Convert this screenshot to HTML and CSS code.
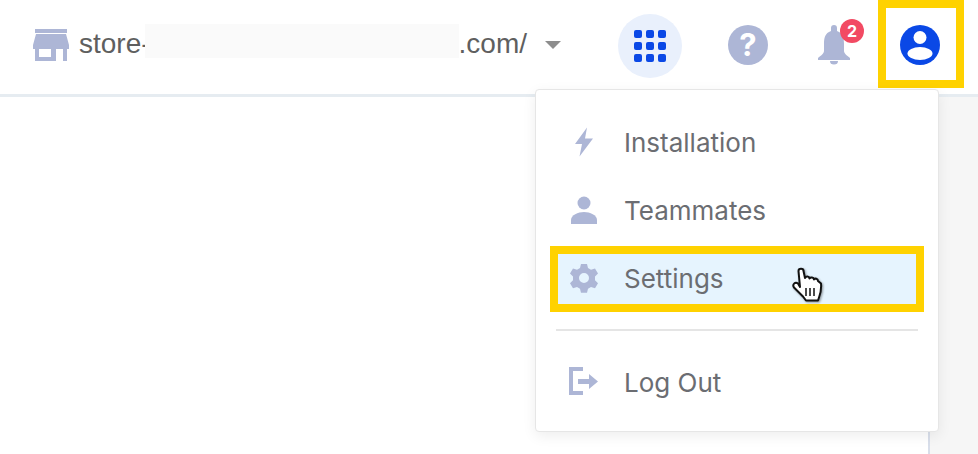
FILE: index.html
```html
<!DOCTYPE html>
<html lang="en">
<head>
<meta charset="utf-8">
<title>Account menu</title>
<link rel="stylesheet" href="styles.css">
</head>
<body>
<header class="topbar">
  <div class="store">
    <svg class="store-icon" width="36" height="32" viewBox="0 0 36 32"><path fill="#adb6d6" fill-rule="evenodd" d="M2 0h32v4H2zM3 5h30l3 11v4H0v-4zM2 20h21v12H2zM6 20v8h12v-8zM30 20h4v12h-4z"/></svg>
    <span class="store-url">store-<span class="redact"></span>.com/</span>
    <svg class="caret" width="16" height="8" viewBox="0 0 16 8"><path fill="#8d8d8d" d="M0 0h16L8 8z"/></svg>
  </div>
  <nav class="tools">
    <span class="apps">
      <svg width="32" height="32" viewBox="0 0 32 32" fill="#0a48e6"><rect x="0" y="0" width="8" height="8" rx="2"/><rect x="12" y="0" width="8" height="8" rx="2"/><rect x="24" y="0" width="8" height="8" rx="2"/><rect x="0" y="12" width="8" height="8" rx="2"/><rect x="12" y="12" width="8" height="8" rx="2"/><rect x="24" y="12" width="8" height="8" rx="2"/><rect x="0" y="24" width="8" height="8" rx="2"/><rect x="12" y="24" width="8" height="8" rx="2"/><rect x="24" y="24" width="8" height="8" rx="2"/></svg>
    </span>
    <span class="help">?</span>
    <span class="bell">
      <svg width="32" height="40" viewBox="0 0 32 40"><path fill="#adb6d6" d="M16 0a3 3 0 0 1 3 3v3c6 2 7 7 7 13v7c0 3 4 5 6 7v2H0v-2c2-2 6-4 6-7v-7c0-6 1-11 7-13V3a3 3 0 0 1 3-3zM12 36h8a4 3.500 0 0 1-8 0z"/></svg>
      <span class="badge">2</span>
    </span>
    <span class="profile">
      <svg width="40" height="40" viewBox="0 0 40 40"><circle cx="20" cy="20" r="20" fill="#0a48e6"/><circle cx="20" cy="12.500" r="6.500" fill="#fff"/><ellipse cx="20" cy="28.500" rx="12.500" ry="6.500" fill="#fff"/></svg>
    </span>
  </nav>
</header>
<div class="page-edge"></div>
<div class="menu">
  <a class="item">
    <svg class="item-icon" width="30" height="30" viewBox="0 0 30 30"><path fill="#adb6d6" d="M18 .5 6 17h7L10.500 29.500 24 11.500h-8z"/></svg>
    <span>Installation</span>
  </a>
  <a class="item">
    <svg class="item-icon" width="30" height="30" viewBox="0 0 30 30"><circle cx="15" cy="8" r="6.500" fill="#adb6d6"/><path fill="#adb6d6" d="M2 29v-4c0-5 7-8 13-8s13 3 13 8v4z"/></svg>
    <span>Teammates</span>
  </a>
  <a class="item item-active">
    <svg class="item-icon" width="30" height="30" viewBox="0 0 30 30"><path fill="#adb6d6" fill-rule="evenodd" d="M12 1h6l1 4 3 1.700 4-1.200 3 5-3 3v3.800l3 3-3 5-4-1.200-3 1.700-1 4h-6l-1-4-3-1.700-4 1.200-3-5 3-3v-3.800l-3-3 3-5 4 1.200 3-1.700zM15 10a5 5 0 1 0 0 10 5 5 0 0 0 0-10z"/></svg>
    <span>Settings</span>
    <svg class="cursor" width="32" height="36" viewBox="0 0 32 36"><path fill="#fff" stroke="#111" stroke-width="2" stroke-linejoin="round" d="M9 20 7.500 4c0-3 5-3 5 0L14 11c1-2 4-2 4.500.5 1-1.500 4-1.500 4.500 1 1-1.500 4-1 4 1.500l3 2.500c.5 5-.5 10-2 14l-1 3H15l-3-4-9-9c-2-3 1-6 4-4z"/><path stroke="#111" stroke-width="1.500" d="M15 21v8M19 21v8M23 21v8"/></svg>
  </a>
  <div class="divider"></div>
  <a class="item">
    <svg class="item-icon" width="30" height="30" viewBox="0 0 30 30"><path fill="#adb6d6" d="M0 0h14v4H4v20h10v4H0zM9 12h11V7l9 7.500-9 7.500v-5H9z"/></svg>
    <span>Log Out</span>
  </a>
</div>
</body>
</html>
```

FILE: styles.css
```css
* { box-sizing: border-box; }
html, body { margin: 0; height: 100%; }
body {
  position: relative;
  width: 978px;
  height: 454px;
  overflow: hidden;
  background: #fff;
  font-family: Inter, "Liberation Sans", sans-serif;
}
.topbar {
  height: 97px;
  display: flex;
  justify-content: space-between;
  border-bottom: 3px solid #e6ecf1;
  background: #fff;
}
.store {
  display: flex;
  align-items: center;
  padding-left: 33px;
  height: 88px;
}
.store-icon { margin-right: 10px; margin-top: 2px; }
.store-url {
  font-family: "Liberation Sans", Arial, sans-serif;
  font-size: 28px;
  color: #5f5f5f;
  display: flex;
  align-items: center;
}
.redact {
  width: 314px;
  height: 34px;
  margin-left: -6px;
  margin-bottom: 6px;
  background: #fafafa;
}
.caret { margin-left: 18px; margin-top: 2px; }
.tools {
  display: flex;
  align-items: flex-start;
  margin-right: 14px;
}
.apps {
  width: 64px;
  height: 64px;
  margin-top: 14px;
  border-radius: 50%;
  background: #e9f0fc;
  display: flex;
  align-items: center;
  justify-content: center;
}
.help {
  width: 40px;
  height: 40px;
  margin: 25px 0 0 46px;
  border-radius: 50%;
  background: #adb6d6;
  color: #fff;
  font-size: 31px;
  font-weight: 700;
  line-height: 40px;
  text-align: center;
}
.bell {
  position: relative;
  width: 32px;
  height: 40px;
  margin: 25px 0 0 50px;
}
.badge {
  position: absolute;
  top: -6px;
  left: 22px;
  width: 24px;
  height: 24px;
  border-radius: 50%;
  background: #f24a63;
  color: #fff;
  font-size: 16px;
  font-weight: 700;
  line-height: 24px;
  text-align: center;
}
.profile {
  width: 86px;
  height: 88px;
  margin-left: 28px;
  border: 8px solid #ffd200;
  display: flex;
  align-items: center;
  justify-content: center;
  padding: 2px 2px 0 0;
}
.page-edge {
  position: absolute;
  left: 928px;
  top: 97px;
  bottom: 0;
  width: 50px;
  background: #f6f6f6;
  border-left: 2px solid #d8deea;
}
.menu {
  position: absolute;
  left: 535px;
  top: 89px;
  width: 404px;
  height: 343px;
  padding: 18px 15px 0 15px;
  background: #fff;
  border: 1px solid #e6e6e6;
  border-radius: 4px;
  box-shadow: 0 4px 14px rgba(0, 0, 0, .07);
}
.item {
  position: relative;
  display: flex;
  align-items: center;
  height: 68px;
  padding-left: 18px;
  color: #6b6d72;
  font-size: 26px;
}
.item-icon { margin-right: 25px; flex: none; }
.item-active {
  height: 66px;
  margin: 2px -1px 0;
  padding: 0 0 2px 11px;
  background: #e6f4fe;
  border: 8px solid #ffd200;
}
.cursor {
  position: absolute;
  left: 233px;
  top: 13px;
  filter: drop-shadow(1px 1px 1px rgba(0,0,0,.4));
}
.divider {
  height: 2px;
  margin: 17px 5px;
  background: #e5e5e5;
}
```
